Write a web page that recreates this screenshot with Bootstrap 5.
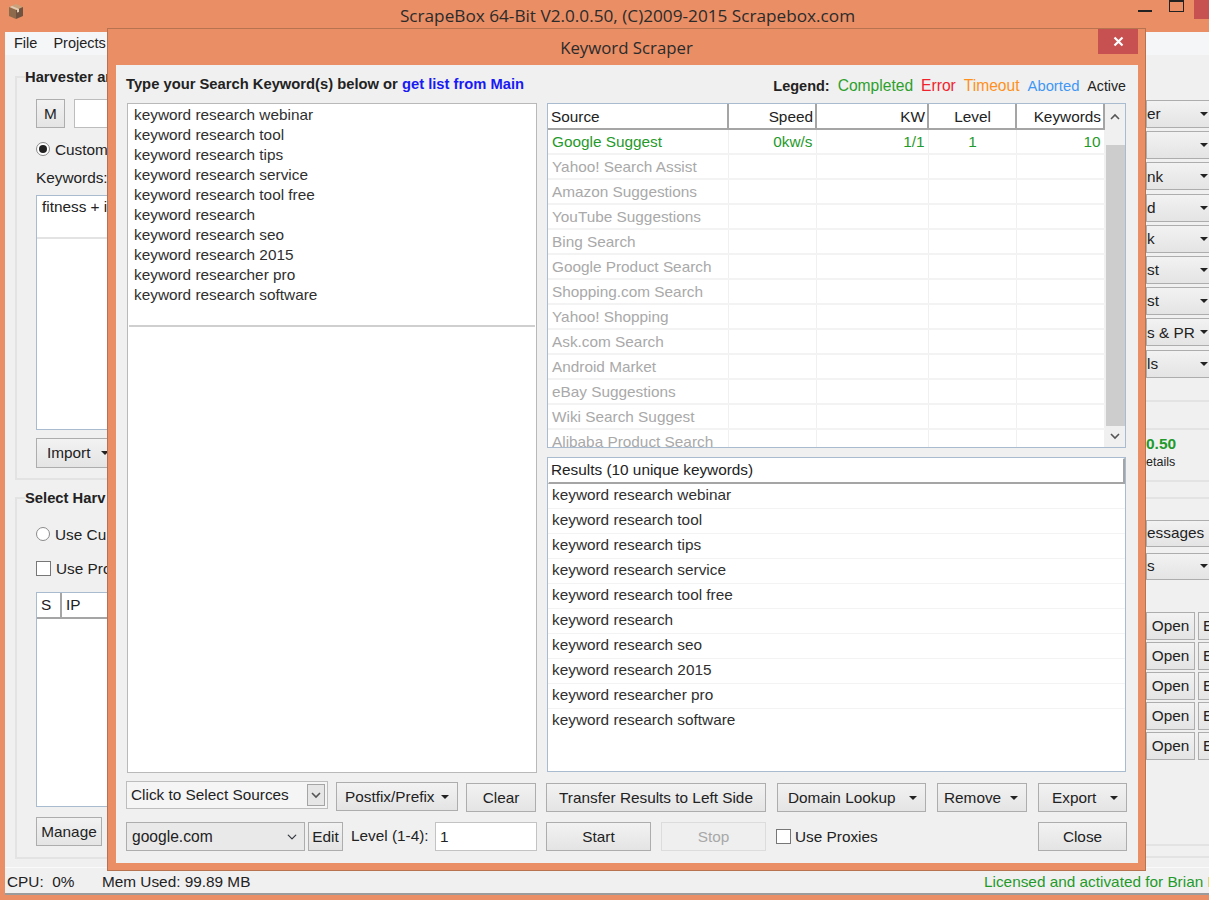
<!DOCTYPE html>
<html lang="en">
<head>
<meta charset="utf-8">
<title>ScrapeBox</title>
<link href="https://cdn.jsdelivr.net/npm/bootstrap@5.3.0/dist/css/bootstrap.min.css" rel="stylesheet">
<style>
:root{--sb-orange:#e98e65;--sb-face:#f0f0f0;--sb-line:#adadad;--sb-blue:#a9bccf;--sb-green:#1f9a2b;}
html,body{margin:0;height:900px;overflow:hidden;}
body{width:1209px;background:var(--sb-orange);font-family:"Liberation Sans",Arial,sans-serif;font-size:15.35px;color:#222;position:relative;}
.app-title{height:32px;padding-left:46px;font-family:"Open Sans",sans-serif;font-size:17.2px;color:#2b2b2b;}
.app-logo{position:absolute;left:7px;top:3px;}
.win-min{position:absolute;left:1138px;top:10px;width:14px;height:2px;background:#222;}
.win-max{position:absolute;left:1169px;top:-1px;width:15px;height:13px;border:1px solid #222;border-top-width:3px;}
.win-close{position:absolute;left:1194px;top:0;width:15px;height:19px;background:#c75050;}
.app-client{margin-left:5px;height:863px;background:var(--sb-face);}
.app-menu{height:23px;background:#f5f6f7;padding-left:9px;gap:16px;font-size:14.5px;}
.app-body{height:812px;}
.pane-left{width:120px;flex:none;padding-left:10px;}
.pane-right{width:63px;margin-left:auto;flex:none;overflow:hidden;padding-top:45px;}
.grp{border:2px solid #e3e3e3;border-right:0;padding-left:19px;}
.grp-one{margin-top:21px;height:404px;}
.grp-two{margin-top:17px;height:362px;}
.grp-label{font-weight:700;font-size:14.75px;margin:-11px 0 0 -11px;height:20px;line-height:20px;background:var(--sb-face);white-space:nowrap;}
.skin-btn{--bs-btn-padding-x:0;--bs-btn-padding-y:0;--bs-btn-font-size:15.35px;--bs-btn-line-height:1;--bs-btn-border-radius:0;--bs-btn-color:#222;--bs-btn-border-color:var(--sb-line);--bs-btn-hover-color:#222;--bs-btn-hover-border-color:var(--sb-line);--bs-btn-disabled-color:#a8a8a8;--bs-btn-disabled-border-color:#dcdcdc;--bs-btn-disabled-opacity:1;background:linear-gradient(#f2f2f2,#e4e4e4);height:29px;flex:none;white-space:nowrap;}
.skin-btn:disabled{background:#efefef;}
.skin-btn.dropdown-toggle{display:flex;align-items:center;justify-content:space-between;}
.skin-btn.dropdown-toggle::after{margin-left:0;}
.m-btn{width:29px;}
.m-field{width:80px;height:29px;border:1px solid #bdbdbd;background:#fff;margin-left:9px;flex:none;}
.radio-row{margin-top:11px;height:20px;gap:5px;white-space:nowrap;}
.row-first{margin-top:16px;}
.row-next{margin-top:14px;}
.fake-radio{width:14px;height:14px;border-radius:50%;border:1px solid #8a8a8a;background:#fff;flex:none;display:flex;align-items:center;justify-content:center;}
.fake-radio i{width:8px;height:8px;border-radius:50%;background:#222;display:block;}
.fake-check{width:15px;height:15px;border:1px solid #777;background:#fff;flex:none;}
.kw-label{margin-top:9px;height:20px;line-height:20px;}
.bg-area{width:90px;height:235px;margin-top:7px;background:#fff;border:1px solid var(--sb-blue);padding:0 0 0 5px;white-space:nowrap;overflow:hidden;}
.bg-area-line{height:22px;line-height:22px;}
.bg-area-rule{border-top:2px solid #e3e3e3;height:0;margin:19px 0 0 -5px;}
.imp-btn{width:80px;margin-top:8px;padding:0 6px 0 10px;height:30px;}
.bg-table{width:90px;height:215px;margin-top:14px;background:#fff;border:1px solid var(--sb-blue);}
.bg-table-head{height:26px;border-bottom:2px solid #a5a5a5;}
.bg-table-head span{padding:0 4px;line-height:24px;}
.bg-table-head span:first-child{width:25px;border-right:2px solid #a5a5a5;}
.man-btn{width:66px;margin-top:10px;}
.r-btn{width:70px;height:28px;margin-bottom:3.2px;padding:0 7px 0 0;}
.r-rule{border-top:2px solid #e3e3e3;}
.rr-a{margin-top:22px;}
.rr-b{margin-top:26px;}
.rr-c{margin-top:9px;}
.rr-d{margin-top:15px;}
.rr-e{margin-top:84px;}
.rr-f{margin-top:10px;}
.r-ver{color:var(--sb-green);font-weight:700;font-size:15.5px;height:20px;line-height:20px;margin-top:4px;}
.r-det{font-size:12.5px;line-height:17px;height:17px;}
.r-msg{margin-top:21px;margin-bottom:6px;height:27px;}
.r-sel{height:27px;margin-bottom:32px;}
.open-row{gap:3px;margin-bottom:2px;}
.open-row .skin-btn{height:28px;width:49px;}
.open-row .skin-btn+.skin-btn{width:30px;padding-left:4px;text-align:left;}
.app-status{height:28px;border-top:1px solid #fafafa;border-bottom:2px solid #9b9b9b;padding:2px 0 0 2px;background:var(--sb-face);}
.stat-cpu{width:95px;flex:none;}
.stat-lic{color:var(--sb-green);margin-left:auto;white-space:nowrap;width:225px;overflow:hidden;}
.dlg{position:absolute;left:107px;top:28px;width:1039px;height:843px;background:var(--sb-orange);border:1px solid #b7734f;}
.dlg-title{height:36px;font-family:"Open Sans",sans-serif;font-size:16.8px;color:#2b2b2b;padding-top:1px;}
.dlg-close{position:absolute;right:7px;top:0;width:40px;height:25px;background:#c75050;}
.dlg-client{margin:0 7px 0 8px;height:798px;background:var(--sb-face);padding:10px 12px 0 10px;display:grid;grid-template-columns:411px 581px;column-gap:9px;}
.col-a,.col-b{display:flex;flex-direction:column;min-width:0;}
.dlg-head{height:28px;line-height:18px;font-weight:700;font-size:14.75px;white-space:nowrap;}
.dlg-head a{color:#1a1af5;text-decoration:none;}
.legend-row{gap:8px;font-weight:400;font-size:15.6px;padding:2px 1px 0 0;}
.legend-row b{font-weight:700;font-size:14.5px;}
.lg-done{color:#2ca02c;}
.lg-err{color:#f0222e;}
.lg-time{color:#ff9020;}
.lg-abort{color:#3f97f5;font-size:14.8px;}
.lg-act{font-size:14.2px;}
.kw-box{height:670px;margin-left:1px;background:#fff;border:1px solid #b9b9b9;padding:1px 0 0 0;}
.kw-item{--bs-list-group-item-padding-x:6px;--bs-list-group-item-padding-y:0;--bs-list-group-bg:transparent;--bs-list-group-color:#2f2f2f;border:0;height:20px;line-height:20px;}
.kw-rule{margin:0;position:absolute;left:1px;right:1px;top:221px;border-top:2px solid #cfcfcf;opacity:1;}
.src-box{height:345px;margin-left:1px;margin-right:1px;background:#fff;border:1px solid var(--sb-blue);overflow:hidden;}
.src-table{--bs-table-bg:transparent;table-layout:fixed;width:556px;margin:0;border-collapse:collapse;}
.src-table th{font-weight:400;height:25px;padding:0 2px 1px 3px;border:0;border-right:2px solid #a5a5a5;border-bottom:2px solid #a5a5a5;line-height:20px;color:#222;}
.src-table td{height:25px;padding:1px 3px 0 4px;border:0;border-right:1px solid #f0f0f0;border-bottom:2px solid #f3f3f3;line-height:22px;color:#a9a9a9;white-space:nowrap;}
.src-table tr.is-done td{color:var(--sb-green);}
.src-scroll{width:21px;flex:none;background:var(--sb-face);position:relative;}
.src-thumb{position:absolute;left:1px;right:1px;top:41px;height:281px;background:#cdcdcd;}
.src-up{position:absolute;left:5px;top:9px;}
.src-dn{position:absolute;left:5px;top:329px;}
.res-box{height:315px;margin:9px 1px 0 1px;background:#fff;border:1px solid var(--sb-blue);}
.res-head{height:26px;border:1px solid #fff;border-bottom:2px solid #a5a5a5;border-right:2px solid #a5a5a5;padding-left:2px;line-height:22px;color:#222;}
.res-item{--bs-list-group-item-padding-x:4px;--bs-list-group-item-padding-y:0;--bs-list-group-bg:transparent;--bs-list-group-color:#2f2f2f;border:0;border-bottom:2px solid #f3f3f3;height:25px;line-height:21px;}
.tool-a{height:31px;margin-top:8px;}
.tool-b{height:29px;margin-top:10px;}
.tool-right{height:29px;margin-top:11px;gap:11px;}
.tool-right2{height:29px;margin-top:10px;}
.combo-a{width:202px;height:28px;border:1px solid #bdbdbd;background:#f5f5f5;padding-left:4px;flex:none;line-height:26px;position:relative;}
.combo-a-btn{position:absolute;right:2px;top:2px;width:18px;height:22px;border:1px solid #a5a5a5;background:#e6e6e6;display:flex;align-items:center;justify-content:center;}
.btn-postfix{width:122px;margin-left:8px;margin-top:1px;padding:0 8px;}
.btn-clear{width:70px;margin-left:8px;margin-top:2px;}
.sel-host{width:179px;height:29px;flex:none;border:1px solid var(--sb-line);border-radius:0;background-color:#e9e9e9;font-size:15.6px;padding:0 0 0 5px;color:#222;--bs-border-radius:0;background-position:right 6px center;background-size:12px 10px;}
.btn-edit{width:35px;margin-left:3px;}
.lvl-label{margin-left:8px;width:84px;white-space:nowrap;line-height:28px;flex:none;}
.lvl-input{width:102px;height:29px;flex:none;border:1px solid #c3c3c3;border-radius:0;padding:0 0 0 4px;font-size:15.35px;color:#222;}
.w-transfer{width:220px;}
.w-domain{width:149px;padding:0 8px 0 10px;}
.w-remove{width:90px;padding:0 8px 0 6px;}
.w-export{width:89px;padding:0 8px 0 13px;}
.w-start{width:105px;}
.w-stop{width:105px;margin-left:10px;}
.use-prox{margin-left:10px;gap:4px;height:29px;}
.w-close{width:89px;margin-left:auto;}
</style>
</head>
<body>
<header class="app-title d-flex align-items-center justify-content-center">ScrapeBox 64-Bit V2.0.0.50, (C)2009-2015 Scrapebox.com</header>
<svg class="app-logo" width="18" height="17" viewBox="0 0 18 17" aria-hidden="true"><path d="M2 4 9 1l7 3-7 3z" fill="#c9a27c"/><path d="M2 4v9l7 3V7z" fill="#8d6a4c"/><path d="M16 4v9l-7 3V7z" fill="#6f5340"/><path d="M5 3l7 3v3l-2 .6V7L3 4z" fill="#e2cdb4"/></svg>
<span class="win-min"></span><span class="win-max"></span><span class="win-close"></span>

<div class="app-client d-flex flex-column">
  <nav class="app-menu d-flex align-items-center"><span>File</span><span>Projects</span></nav>
  <main class="app-body d-flex">
    <section class="pane-left">
      <div class="grp grp-one">
        <div class="grp-label">Harvester and</div>
        <div class="d-flex mt-2 pt-1"><button class="btn skin-btn m-btn" type="button">M</button><span class="m-field"></span></div>
        <div class="radio-row d-flex align-items-center"><span class="fake-radio"><i></i></span><span>Custom</span></div>
        <div class="kw-label">Keywords:</div>
        <div class="bg-area"><div class="bg-area-line">fitness + i</div><div class="bg-area-rule"></div></div>
        <button class="btn skin-btn dropdown-toggle imp-btn" type="button">Import</button>
      </div>
      <div class="grp grp-two">
        <div class="grp-label">Select Harv</div>
        <div class="radio-row row-first d-flex align-items-center"><span class="fake-radio"></span><span>Use Cu</span></div>
        <div class="radio-row row-next d-flex align-items-center"><span class="fake-check"></span><span>Use Pro</span></div>
        <div class="bg-table"><div class="bg-table-head d-flex"><span>S</span><span>IP</span></div></div>
        <button class="btn skin-btn man-btn" type="button">Manage</button>
      </div>
    </section>
    <section class="pane-right">
      <button class="btn skin-btn dropdown-toggle r-btn" type="button">er</button>
      <button class="btn skin-btn dropdown-toggle r-btn" type="button"><span></span></button>
      <button class="btn skin-btn dropdown-toggle r-btn" type="button">nk</button>
      <button class="btn skin-btn dropdown-toggle r-btn" type="button">d</button>
      <button class="btn skin-btn dropdown-toggle r-btn" type="button">k</button>
      <button class="btn skin-btn dropdown-toggle r-btn" type="button">st</button>
      <button class="btn skin-btn dropdown-toggle r-btn" type="button">st</button>
      <button class="btn skin-btn dropdown-toggle r-btn" type="button">s &amp; PR</button>
      <button class="btn skin-btn dropdown-toggle r-btn" type="button">ls</button>
      <div class="r-rule rr-a"></div>
      <div class="r-rule rr-b"></div>
      <div class="r-ver">0.50</div>
      <div class="r-det">etails</div>
      <div class="r-rule rr-c"></div>
      <div class="r-rule rr-d"></div>
      <button class="btn skin-btn r-btn r-msg text-start" type="button">essages</button>
      <button class="btn skin-btn dropdown-toggle r-btn r-sel" type="button">s</button>
      <div class="open-row d-flex"><button class="btn skin-btn" type="button">Open</button><button class="btn skin-btn" type="button">E</button></div>
      <div class="open-row d-flex"><button class="btn skin-btn" type="button">Open</button><button class="btn skin-btn" type="button">E</button></div>
      <div class="open-row d-flex"><button class="btn skin-btn" type="button">Open</button><button class="btn skin-btn" type="button">E</button></div>
      <div class="open-row d-flex"><button class="btn skin-btn" type="button">Open</button><button class="btn skin-btn" type="button">E</button></div>
      <div class="open-row d-flex"><button class="btn skin-btn" type="button">Open</button><button class="btn skin-btn" type="button">E</button></div>
      <div class="r-rule rr-e"></div>
      <div class="r-rule rr-f"></div>
    </section>
  </main>
  <footer class="app-status d-flex align-items-center"><span class="stat-cpu">CPU:&nbsp; 0%</span><span>Mem Used: 99.89 MB</span><span class="stat-lic">Licensed and activated for Brian M</span></footer>
</div>

<div class="dlg" role="dialog" aria-label="Keyword Scraper">
  <div class="dlg-title d-flex align-items-center justify-content-center">Keyword Scraper</div>
  <span class="dlg-close d-flex align-items-center justify-content-center"><svg width="11" height="11" viewBox="0 0 11 11" aria-hidden="true"><path d="M1.5 1.5l8 8M9.5 1.5l-8 8" stroke="#fff" stroke-width="2.2"/></svg></span>
  <div class="dlg-client">
    <div class="col-a">
      <div class="dlg-head">Type your Search Keyword(s) below or <a href="#">get list from Main</a></div>
      <div class="kw-box position-relative">
        <ul class="list-group list-group-flush">
          <li class="list-group-item kw-item">keyword research webinar</li>
          <li class="list-group-item kw-item">keyword research tool</li>
          <li class="list-group-item kw-item">keyword research tips</li>
          <li class="list-group-item kw-item">keyword research service</li>
          <li class="list-group-item kw-item">keyword research tool free</li>
          <li class="list-group-item kw-item">keyword research</li>
          <li class="list-group-item kw-item">keyword research seo</li>
          <li class="list-group-item kw-item">keyword research 2015</li>
          <li class="list-group-item kw-item">keyword researcher pro</li>
          <li class="list-group-item kw-item">keyword research software</li>
        </ul>
        <hr class="kw-rule">
      </div>
      <div class="tool-a d-flex align-items-start">
        <div class="combo-a">Click to Select Sources<span class="combo-a-btn"><svg width="10" height="7" viewBox="0 0 10 7" aria-hidden="true"><path d="M1 1l4 4 4-4" fill="none" stroke="#555" stroke-width="1.6"/></svg></span></div>
        <button class="btn skin-btn dropdown-toggle btn-postfix" type="button">Postfix/Prefix</button>
        <button class="btn skin-btn btn-clear" type="button">Clear</button>
      </div>
      <div class="tool-b d-flex">
        <select class="form-select sel-host" aria-label="Search engine"><option>google.com</option></select>
        <button class="btn skin-btn btn-edit" type="button">Edit</button>
        <span class="lvl-label">Level (1-4):</span>
        <input class="form-control lvl-input" type="text" value="1" aria-label="Level">
      </div>
    </div>
    <div class="col-b">
      <div class="dlg-head legend-row d-flex justify-content-end align-items-baseline"><b>Legend:</b><span class="lg-done">Completed</span><span class="lg-err">Error</span><span class="lg-time">Timeout</span><span class="lg-abort">Aborted</span><span class="lg-act">Active</span></div>
      <div class="src-box d-flex">
        <table class="table src-table">
          <colgroup><col style="width:180px"><col style="width:88px"><col style="width:112px"><col style="width:88px"><col style="width:88px"></colgroup>
          <thead><tr><th>Source</th><th class="text-end">Speed</th><th class="text-end">KW</th><th class="text-center">Level</th><th class="text-end">Keywords</th></tr></thead>
          <tbody>
            <tr class="is-done"><td>Google Suggest</td><td class="text-end">0kw/s</td><td class="text-end">1/1</td><td class="text-center">1</td><td class="text-end">10</td></tr>
            <tr><td>Yahoo! Search Assist</td><td></td><td></td><td></td><td></td></tr>
            <tr><td>Amazon Suggestions</td><td></td><td></td><td></td><td></td></tr>
            <tr><td>YouTube Suggestions</td><td></td><td></td><td></td><td></td></tr>
            <tr><td>Bing Search</td><td></td><td></td><td></td><td></td></tr>
            <tr><td>Google Product Search</td><td></td><td></td><td></td><td></td></tr>
            <tr><td>Shopping.com Search</td><td></td><td></td><td></td><td></td></tr>
            <tr><td>Yahoo! Shopping</td><td></td><td></td><td></td><td></td></tr>
            <tr><td>Ask.com Search</td><td></td><td></td><td></td><td></td></tr>
            <tr><td>Android Market</td><td></td><td></td><td></td><td></td></tr>
            <tr><td>eBay Suggestions</td><td></td><td></td><td></td><td></td></tr>
            <tr><td>Wiki Search Suggest</td><td></td><td></td><td></td><td></td></tr>
            <tr><td>Alibaba Product Search</td><td></td><td></td><td></td><td></td></tr>
          </tbody>
        </table>
        <div class="src-scroll">
          <svg class="src-up" width="10" height="7" viewBox="0 0 10 7" aria-hidden="true"><path d="M1 6l4-4 4 4" fill="none" stroke="#555" stroke-width="1.6"/></svg>
          <div class="src-thumb"></div>
          <svg class="src-dn" width="10" height="7" viewBox="0 0 10 7" aria-hidden="true"><path d="M1 1l4 4 4-4" fill="none" stroke="#555" stroke-width="1.6"/></svg>
        </div>
      </div>
      <div class="res-box">
        <div class="res-head">Results (10 unique keywords)</div>
        <ul class="list-group list-group-flush">
          <li class="list-group-item res-item">keyword research webinar</li>
          <li class="list-group-item res-item">keyword research tool</li>
          <li class="list-group-item res-item">keyword research tips</li>
          <li class="list-group-item res-item">keyword research service</li>
          <li class="list-group-item res-item">keyword research tool free</li>
          <li class="list-group-item res-item">keyword research</li>
          <li class="list-group-item res-item">keyword research seo</li>
          <li class="list-group-item res-item">keyword research 2015</li>
          <li class="list-group-item res-item">keyword researcher pro</li>
          <li class="list-group-item res-item">keyword research software</li>
        </ul>
      </div>
      <div class="tool-right d-flex">
        <button class="btn skin-btn w-transfer" type="button">Transfer Results to Left Side</button>
        <button class="btn skin-btn dropdown-toggle w-domain" type="button">Domain Lookup</button>
        <button class="btn skin-btn dropdown-toggle w-remove" type="button">Remove</button>
        <button class="btn skin-btn dropdown-toggle w-export" type="button">Export</button>
      </div>
      <div class="tool-right2 d-flex">
        <button class="btn skin-btn w-start" type="button">Start</button>
        <button class="btn skin-btn w-stop" type="button" disabled>Stop</button>
        <label class="use-prox d-flex align-items-center"><span class="fake-check"></span><span>Use Proxies</span></label>
        <button class="btn skin-btn w-close" type="button">Close</button>
      </div>
    </div>
  </div>
</div>
<script src="https://cdn.jsdelivr.net/npm/bootstrap@5.3.0/dist/js/bootstrap.bundle.min.js"></script>
</body>
</html>
